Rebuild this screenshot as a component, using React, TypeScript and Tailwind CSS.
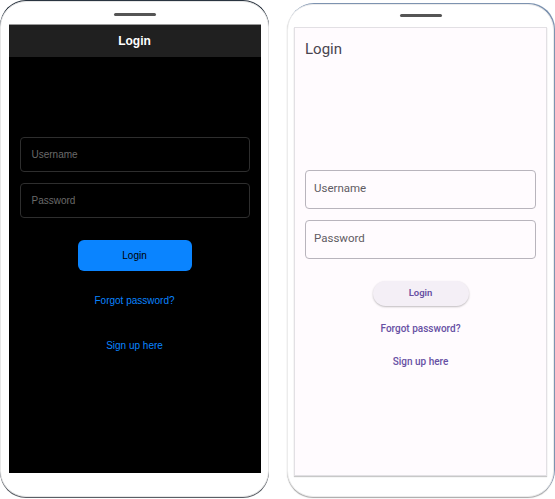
import React from 'react'

const DarkPhone: React.FC = () => (
  <div className="relative w-[269px] h-[496px] mt-[1px] rounded-[26px] bg-white border border-[#e6e6e6] shadow-[0_-1px_0_#2a3440,0_1px_0_#5a5f66] flex flex-col items-center pt-[11px]">
    <div className="w-[42px] h-[3px] rounded-full bg-[#555]" />
    <div className="mt-[8px] w-[252px] h-[449px] bg-black border-t border-[#999] flex flex-col font-['Liberation_Sans',Arial,sans-serif]">
      <div className="h-[32px] bg-[#202020] flex items-center justify-center text-white text-[12px] font-bold">
        Login
      </div>
      <div className="flex flex-col items-center px-[11px] pt-[80px]">
        <div className="w-full h-[35px] rounded-[4px] border border-[#2e2e2e] flex items-center px-[11px] text-[10px] text-[#6a6a6a]">
          Username
        </div>
        <div className="w-full h-[35px] mt-[11px] rounded-[4px] border border-[#2e2e2e] flex items-center px-[11px] text-[10px] text-[#6a6a6a]">
          Password
        </div>
        <button className="mt-[22px] w-[114px] h-[31px] rounded-[6px] bg-[#0a84ff] text-black text-[10px]">
          Login
        </button>
        <div className="mt-[22px] text-[10px] text-[#0a84ff]">Forgot password?</div>
        <div className="mt-[30px] text-[10px] text-[#0a84ff]">Sign up here</div>
      </div>
    </div>
  </div>
)

const LightPhone: React.FC = () => (
  <div className="relative w-[267px] h-[493px] mt-[4px] ml-[18px] rounded-[26px] bg-white border border-[#ececec] shadow-[1px_-1px_0_#7d93b0,0_1px_1px_#a8a8a8] flex flex-col items-center pt-[9px]">
    <div className="w-[42px] h-[3px] rounded-full bg-[#555]" />
    <div className="mt-[10px] w-[253px] h-[449px] bg-[#fffbfe] border border-[#e2e0e4] shadow-[0_1px_1px_#c8c8c8] flex flex-col font-['Roboto',sans-serif]">
      <div className="px-[10px] pt-[10px] text-[15px] text-[#49454f]">Login</div>
      <div className="flex flex-col items-center px-[10px] pt-[109px]">
        <div className="w-full h-[39px] rounded-[4px] border-[1.5px] border-[#b8b4bc] flex items-center px-[8px] text-[11.5px] text-[#5f5b63]">
          Username
        </div>
        <div className="w-full h-[39px] mt-[11px] rounded-[4px] border-[1.5px] border-[#b8b4bc] flex items-center px-[8px] text-[11.5px] text-[#5f5b63]">
          Password
        </div>
        <button className="mt-[22px] w-[96px] h-[25px] rounded-full bg-[#f4eff6] shadow-[0_1px_2px_rgba(0,0,0,0.25)] text-[#6750a4] text-[9.5px] font-semibold">
          Login
        </button>
        <div className="mt-[15px] text-[10px] font-medium text-[#6750a4]">Forgot password?</div>
        <div className="mt-[18px] text-[10px] font-medium text-[#6750a4]">Sign up here</div>
      </div>
    </div>
  </div>
)

export default function App() {
  return (
    <div className="w-[555px] h-[499px] bg-white flex overflow-hidden">
      <DarkPhone />
      <LightPhone />
    </div>
  )
}
